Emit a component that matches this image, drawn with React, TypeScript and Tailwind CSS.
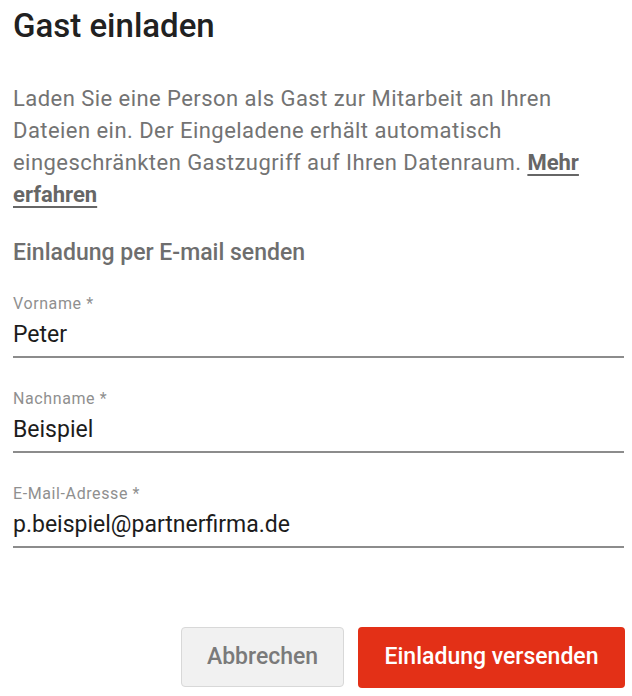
import React from 'react'

function Field({ label, value }: { label: string; value: string }) {
  return (
    <div className="flex flex-col">
      <label className="text-[16px] leading-[20px] tracking-[0.6px] text-[#8f8f8f]">{label}</label>
      <div className="mt-[6px] text-[23px] leading-[30px] text-[#1c1c1c] pb-[6px] border-b-2 border-[#8c8c8c]">
        {value}
      </div>
    </div>
  )
}

export default function App() {
  return (
    <main className="w-[632px] h-[696px] bg-white pl-[13px] pr-[8px] pt-[6px] flex flex-col font-['Roboto',sans-serif]">
      <h1 className="text-[33px] leading-[40px] font-medium text-[#212121]">Gast einladen</h1>

      <p className="mt-[37px] text-[22px] leading-[32px] tracking-[0.45px] text-[#737373]">
        Laden Sie eine Person als Gast zur Mitarbeit an Ihren Dateien ein. Der Eingeladene erhält automatisch
        eingeschränkten Gastzugriff auf Ihren Datenraum.{' '}
        <a href="#" className="font-bold tracking-normal text-[#666] underline underline-offset-[4px] decoration-2">
          Mehr erfahren
        </a>
      </p>

      <h2 className="mt-[27px] text-[23px] leading-[30px] font-medium text-[#6e6e6e]">Einladung per E-mail senden</h2>

      <div className="mt-[26px] flex flex-col gap-[31px]">
        <Field label="Vorname *" value="Peter" />
        <Field label="Nachname *" value="Beispiel" />
        <Field label="E-Mail-Adresse *" value="p.beispiel@partnerfirma.de" />
      </div>

      <div className="mt-auto mb-[8px] flex justify-end gap-[14px] mr-[-1px]">
        <button className="w-[163px] h-[60px] rounded-[4px] border border-[#d8d8d8] bg-[#f1f1f1] text-[23px] font-medium text-[#7a7a7a]">
          Abbrechen
        </button>
        <button className="w-[267px] h-[61px] rounded-[4px] bg-[#e33017] text-[23px] font-medium text-white">
          Einladung versenden
        </button>
      </div>
    </main>
  )
}
